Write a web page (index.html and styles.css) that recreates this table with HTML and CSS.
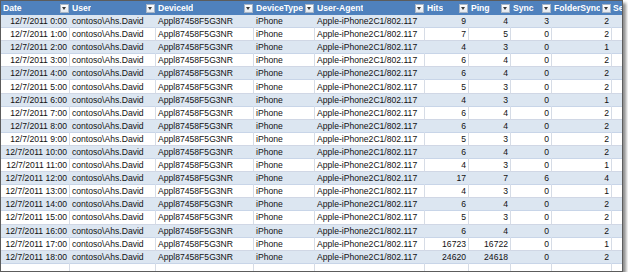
FILE: index.html
```html
<!DOCTYPE html>
<html lang="en">
<head>
    <meta charset="UTF-8">
    <title>Device log</title>
    <link rel="stylesheet" href="styles.css">
</head>
<body>
    <div class="sheet">
        <table class="log">
            <colgroup>
                <col class="c-date"><col class="c-user"><col class="c-dev"><col class="c-type"><col class="c-agent">
                <col class="c-hits"><col class="c-ping"><col class="c-sync"><col class="c-fold"><col class="c-sess">
            </colgroup>
            <thead>
                <tr>
                    <th><div class="hd"><span>Date</span><span class="flt"></span></div></th>
                    <th><div class="hd"><span>User</span><span class="flt"></span></div></th>
                    <th><div class="hd"><span>DeviceId</span><span class="flt"></span></div></th>
                    <th><div class="hd"><span>DeviceType</span><span class="flt"></span></div></th>
                    <th><div class="hd"><span>User-Agent</span><span class="flt"></span></div></th>
                    <th><div class="hd"><span>Hits</span><span class="flt"></span></div></th>
                    <th><div class="hd"><span>Ping</span><span class="flt"></span></div></th>
                    <th><div class="hd"><span>Sync</span><span class="flt"></span></div></th>
                    <th><div class="hd"><span>FolderSync</span><span class="flt"></span></div></th>
                    <th class="last"><div class="hd"><span>Se</span></div></th>
                </tr>
            </thead>
            <tbody>
                <tr class="band"><td class="num">12/7/2011 0:00</td><td>contoso\Ahs.David</td><td>Appl87458F5G3NR</td><td>iPhone</td><td>Apple-iPhone2C1/802.117</td><td class="num">9</td><td class="num">4</td><td class="num">3</td><td class="num">2</td><td></td></tr>
                <tr><td class="num">12/7/2011 1:00</td><td>contoso\Ahs.David</td><td>Appl87458F5G3NR</td><td>iPhone</td><td>Apple-iPhone2C1/802.117</td><td class="num">7</td><td class="num">5</td><td class="num">0</td><td class="num">2</td><td></td></tr>
                <tr class="band"><td class="num">12/7/2011 2:00</td><td>contoso\Ahs.David</td><td>Appl87458F5G3NR</td><td>iPhone</td><td>Apple-iPhone2C1/802.117</td><td class="num">4</td><td class="num">3</td><td class="num">0</td><td class="num">1</td><td></td></tr>
                <tr><td class="num">12/7/2011 3:00</td><td>contoso\Ahs.David</td><td>Appl87458F5G3NR</td><td>iPhone</td><td>Apple-iPhone2C1/802.117</td><td class="num">6</td><td class="num">4</td><td class="num">0</td><td class="num">2</td><td></td></tr>
                <tr class="band"><td class="num">12/7/2011 4:00</td><td>contoso\Ahs.David</td><td>Appl87458F5G3NR</td><td>iPhone</td><td>Apple-iPhone2C1/802.117</td><td class="num">6</td><td class="num">4</td><td class="num">0</td><td class="num">2</td><td></td></tr>
                <tr><td class="num">12/7/2011 5:00</td><td>contoso\Ahs.David</td><td>Appl87458F5G3NR</td><td>iPhone</td><td>Apple-iPhone2C1/802.117</td><td class="num">5</td><td class="num">3</td><td class="num">0</td><td class="num">2</td><td></td></tr>
                <tr class="band"><td class="num">12/7/2011 6:00</td><td>contoso\Ahs.David</td><td>Appl87458F5G3NR</td><td>iPhone</td><td>Apple-iPhone2C1/802.117</td><td class="num">4</td><td class="num">3</td><td class="num">0</td><td class="num">1</td><td></td></tr>
                <tr><td class="num">12/7/2011 7:00</td><td>contoso\Ahs.David</td><td>Appl87458F5G3NR</td><td>iPhone</td><td>Apple-iPhone2C1/802.117</td><td class="num">6</td><td class="num">4</td><td class="num">0</td><td class="num">2</td><td></td></tr>
                <tr class="band"><td class="num">12/7/2011 8:00</td><td>contoso\Ahs.David</td><td>Appl87458F5G3NR</td><td>iPhone</td><td>Apple-iPhone2C1/802.117</td><td class="num">6</td><td class="num">4</td><td class="num">0</td><td class="num">2</td><td></td></tr>
                <tr><td class="num">12/7/2011 9:00</td><td>contoso\Ahs.David</td><td>Appl87458F5G3NR</td><td>iPhone</td><td>Apple-iPhone2C1/802.117</td><td class="num">5</td><td class="num">3</td><td class="num">0</td><td class="num">2</td><td></td></tr>
                <tr class="band"><td class="num">12/7/2011 10:00</td><td>contoso\Ahs.David</td><td>Appl87458F5G3NR</td><td>iPhone</td><td>Apple-iPhone2C1/802.117</td><td class="num">6</td><td class="num">4</td><td class="num">0</td><td class="num">2</td><td></td></tr>
                <tr><td class="num">12/7/2011 11:00</td><td>contoso\Ahs.David</td><td>Appl87458F5G3NR</td><td>iPhone</td><td>Apple-iPhone2C1/802.117</td><td class="num">4</td><td class="num">3</td><td class="num">0</td><td class="num">1</td><td></td></tr>
                <tr class="band"><td class="num">12/7/2011 12:00</td><td>contoso\Ahs.David</td><td>Appl87458F5G3NR</td><td>iPhone</td><td>Apple-iPhone2C1/802.117</td><td class="num">17</td><td class="num">7</td><td class="num">6</td><td class="num">4</td><td></td></tr>
                <tr><td class="num">12/7/2011 13:00</td><td>contoso\Ahs.David</td><td>Appl87458F5G3NR</td><td>iPhone</td><td>Apple-iPhone2C1/802.117</td><td class="num">4</td><td class="num">3</td><td class="num">0</td><td class="num">1</td><td></td></tr>
                <tr class="band"><td class="num">12/7/2011 14:00</td><td>contoso\Ahs.David</td><td>Appl87458F5G3NR</td><td>iPhone</td><td>Apple-iPhone2C1/802.117</td><td class="num">6</td><td class="num">4</td><td class="num">0</td><td class="num">2</td><td></td></tr>
                <tr><td class="num">12/7/2011 15:00</td><td>contoso\Ahs.David</td><td>Appl87458F5G3NR</td><td>iPhone</td><td>Apple-iPhone2C1/802.117</td><td class="num">5</td><td class="num">3</td><td class="num">0</td><td class="num">2</td><td></td></tr>
                <tr class="band"><td class="num">12/7/2011 16:00</td><td>contoso\Ahs.David</td><td>Appl87458F5G3NR</td><td>iPhone</td><td>Apple-iPhone2C1/802.117</td><td class="num">6</td><td class="num">4</td><td class="num">0</td><td class="num">2</td><td></td></tr>
                <tr><td class="num">12/7/2011 17:00</td><td>contoso\Ahs.David</td><td>Appl87458F5G3NR</td><td>iPhone</td><td>Apple-iPhone2C1/802.117</td><td class="num">16723</td><td class="num">16722</td><td class="num">0</td><td class="num">1</td><td></td></tr>
                <tr class="band"><td class="num">12/7/2011 18:00</td><td>contoso\Ahs.David</td><td>Appl87458F5G3NR</td><td>iPhone</td><td>Apple-iPhone2C1/802.117</td><td class="num">24620</td><td class="num">24618</td><td class="num">0</td><td class="num">2</td><td></td></tr>
                <tr class="empty"><td></td><td></td><td></td><td></td><td></td><td></td><td></td><td></td><td></td><td></td></tr>
            </tbody>
        </table>
    </div>
</body>
</html>
```

FILE: styles.css
```css
html, body {
    margin: 0;
    padding: 0;
    background-color: #ffffff;
}

.sheet {
    width: 621px;
    height: 270px;
    border: 1px solid #5c5c5c;
    box-shadow: 3px 3px 3px rgba(0, 0, 0, 0.45);
    overflow: hidden;
    background-color: #ffffff;
}

.log {
    border-collapse: separate;
    border-spacing: 0;
    table-layout: fixed;
    width: 661px;
    font-family: "Liberation Sans", Arial, sans-serif;
    font-size: 8.6px;
    color: #111111;
}

.c-date  { width: 69px; }
.c-user  { width: 86px; }
.c-dev   { width: 98px; }
.c-type  { width: 61px; }
.c-agent { width: 110px; }
.c-hits  { width: 44px; }
.c-ping  { width: 42px; }
.c-sync  { width: 41px; }
.c-fold  { width: 60px; }
.c-sess  { width: 50px; }

/* header row */
.log thead tr {
    height: 14px;
}

.log th {
    background-color: #4f81bd;
    color: #ffffff;
    font-weight: bold;
    text-align: left;
    padding: 0 1px 0 2px;
    white-space: nowrap;
    overflow: hidden;
}

.log th.last {
    padding-left: 1px;
}

.hd {
    display: flex;
    align-items: center;
    justify-content: space-between;
    gap: 2px;
    line-height: 14px;
}

.hd span:first-child {
    overflow: hidden;
}

/* filter dropdown button */
.flt {
    flex: none;
    position: relative;
    width: 7px;
    height: 7px;
    border: 1px solid #a9b6c6;
    background: linear-gradient(#ffffff, #e3e8ef);
}

.flt::after {
    content: "";
    position: absolute;
    left: 1px;
    top: 2px;
    border-left: 2.5px solid transparent;
    border-right: 2.5px solid transparent;
    border-top: 3px solid #3a3a3a;
}

/* body rows */
.log tbody tr {
    height: 13.1px;
}

.log td {
    padding: 0 2px;
    line-height: 12px;
    white-space: nowrap;
    overflow: hidden;
    border-right: 1px solid #d6dce6;
    border-bottom: 1px solid #d0d7e5;
}

.log td.num {
    text-align: right;
}

.log tr.band td {
    background-color: #dce6f1;
    border-right-color: #dce6f1;
    border-bottom-color: #c8d5e8;
}

.log tr.empty {
    height: 7px;
}

.log tr.empty td {
    border-bottom: none;
}
```
